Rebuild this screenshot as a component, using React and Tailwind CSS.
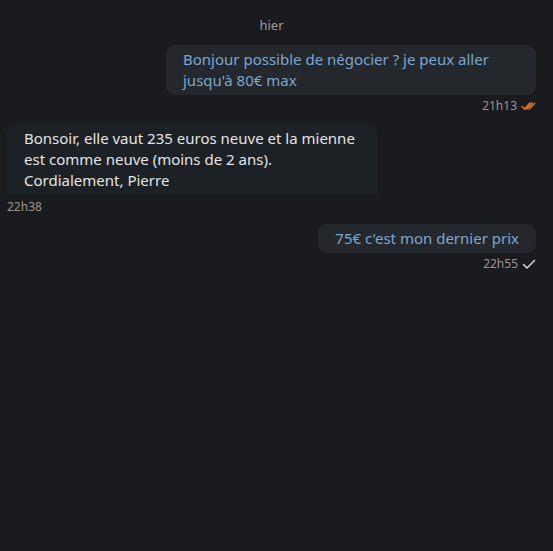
import React from 'react';

function DoubleCheck() {
  return (
    <svg width="15" height="10" viewBox="0 0 15 10" fill="none" stroke="#e2762f" strokeWidth="1.6" strokeLinecap="round" strokeLinejoin="round">
      <path d="M1 5.5 L3.5 8 L9 2" />
      <path d="M5.5 8 L11 2" />
      <path d="M8 8 L13.5 2.5" />
    </svg>
  );
}

function SingleCheck() {
  return (
    <svg width="14" height="11" viewBox="0 0 14 11" fill="none" stroke="#d6d6d6" strokeWidth="1.5" strokeLinecap="round" strokeLinejoin="round">
      <path d="M1.5 5.5 L5 9 L12.5 1.5" />
    </svg>
  );
}

function Sent({ text, time, read }) {
  return (
    <div className="flex flex-col items-end">
      <div className="max-w-[370px] rounded-[9px] bg-[#24282d] px-[17px] py-[4px] text-[15px] leading-[21px] text-[#7ba7d0]">
        {text}
      </div>
      <div className="mt-[3px] flex h-[16px] items-center gap-[4px] text-[12px] text-[#9b958f]">
        <span>{time}</span>
        {read ? <DoubleCheck /> : <SingleCheck />}
      </div>
    </div>
  );
}

export default function App() {
  return (
    <div className="min-h-screen bg-[#1a1b1e] pl-[7px] pr-[17px] pt-[16px]" style={{ fontFamily: '"Noto Sans", sans-serif' }}>
      <div className="mb-[11px] text-center text-[13px] leading-[18px] text-[#a19b95]">hier</div>

      <Sent text="Bonjour possible de négocier ? je peux aller jusqu'à 80€ max" time="21h13" read />

      <div className="mt-[10px] flex flex-col items-start">
        <div className="max-w-[371px] rounded-t-[9px] bg-[#1c2125] px-[17px] py-[4px] text-[15px] leading-[21px] text-[#e4e4e4]">
          Bonsoir, elle vaut 235 euros neuve et la mienne est comme neuve (moins de 2 ans).
          <br />
          Cordialement, Pierre
        </div>
        <div className="mt-[4px] h-[16px] text-[12px] leading-[16px] text-[#9b958f]">22h38</div>
      </div>

      <div className="mt-[9px]">
        <Sent text="75€ c'est mon dernier prix" time="22h55" />
      </div>
    </div>
  );
}
